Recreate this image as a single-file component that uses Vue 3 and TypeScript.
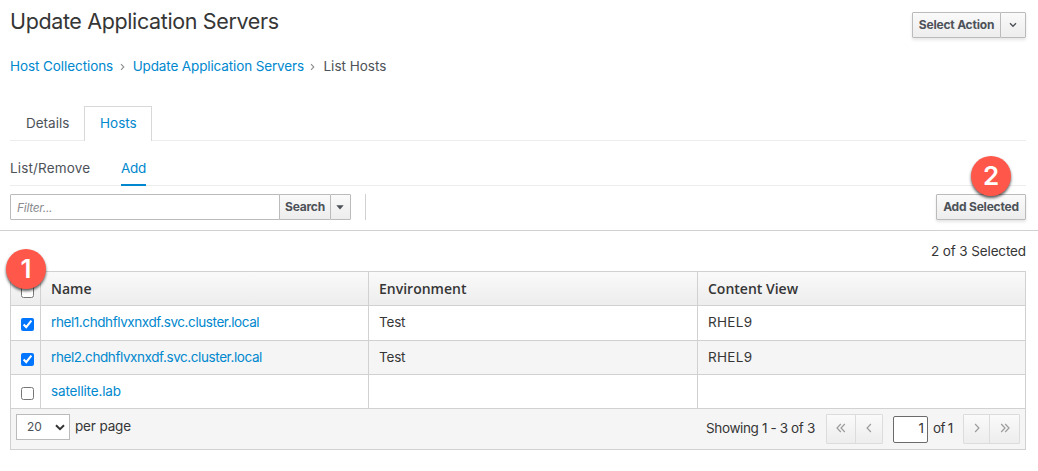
<script setup lang="ts">
import { ref } from 'vue'

interface Host {
  name: string
  environment: string
  view: string
  selected: boolean
}

const hosts = ref<Host[]>([
  { name: 'rhel1.chdhflvxnxdf.svc.cluster.local', environment: 'Test', view: 'RHEL9', selected: true },
  { name: 'rhel2.chdhflvxnxdf.svc.cluster.local', environment: 'Test', view: 'RHEL9', selected: true },
  { name: 'satellite.lab', environment: '', view: '', selected: false },
])
const filter = ref('')
</script>

<template>
  <main class="page">
    <header class="heading">
      <h1><span class="t-title">Update Application Servers</span></h1>
      <div class="btn-group">
        <button class="btn main">Select Action</button>
        <button class="btn toggle" aria-label="More actions">
          <svg width="8" height="6" viewBox="0 0 8 6"><path d="M1 1.2 4 4.2 7 1.2" fill="none" stroke="#4d5258" stroke-width="1.4" /></svg>
        </button>
      </div>
    </header>

    <nav class="breadcrumb">
      <a class="t-bc1">Host Collections</a>
      <svg class="sep" width="5" height="8" viewBox="0 0 5 8"><path d="M1 1.2 3.8 4 1 6.8" /></svg>
      <a class="t-bc2">Update Application Servers</a>
      <svg class="sep" width="5" height="8" viewBox="0 0 5 8"><path d="M1 1.2 3.8 4 1 6.8" /></svg>
      <span>List Hosts</span>
    </nav>

    <div class="tabs">
      <a class="tab">Details</a>
      <a class="tab active">Hosts</a>
    </div>

    <div class="subtabs">
      <a class="subtab list">List/Remove</a>
      <a class="subtab active">Add</a>
    </div>

    <div class="toolbar">
      <div class="search">
        <input v-model="filter" type="text" placeholder="Filter..." />
        <button class="btn go">Search</button>
        <button class="btn caret" aria-label="Saved searches">
          <svg width="8" height="5" viewBox="0 0 8 5"><path d="M0.3 0.3h7.4L4 4.6z" fill="#4d5258" /></svg>
        </button>
      </div>
      <div class="add-wrap">
        <button class="btn add">Add Selected</button>
        <span class="badge two">2</span>
      </div>
    </div>

    <div class="count">2 of 3 Selected</div>

    <section class="table">
      <div class="row head">
        <div class="cell check"><input type="checkbox" /></div>
        <div class="cell">Name</div>
        <div class="cell">Environment</div>
        <div class="cell">Content View</div>
      </div>
      <div v-for="host in hosts" :key="host.name" class="row">
        <div class="cell check"><input v-model="host.selected" type="checkbox" /></div>
        <div class="cell"><a :class="host.environment ? 't-host' : 't-lab'">{{ host.name }}</a></div>
        <div class="cell"><span class="t-test">{{ host.environment }}</span></div>
        <div class="cell"><span class="t-rhel">{{ host.view }}</span></div>
      </div>
      <footer class="pager">
        <div class="select">20
          <svg width="10" height="7" viewBox="0 0 10 7"><path d="M1 1.3 5 5.2 9 1.3" fill="none" stroke="#333" stroke-width="2" /></svg>
        </div>
        <span class="per">per page</span>
        <span class="showing">Showing 1 - 3 of 3</span>
        <div class="pages">
          <span class="pg wide"><svg width="10" height="10" viewBox="0 0 10 10"><path d="M4.8 1 1 5l3.8 4M8.8 1 5 5l3.8 4" /></svg></span>
          <span class="pg"><svg width="6" height="10" viewBox="0 0 6 10"><path d="M4.9 1 1.1 5l3.8 4" /></svg></span>
        </div>
        <div class="current">1</div>
        <span class="total">of 1</span>
        <div class="pages next">
          <span class="pg"><svg width="6" height="10" viewBox="0 0 6 10"><path d="M1.1 1l3.8 4L1.1 9" /></svg></span>
          <span class="pg wide"><svg width="10" height="10" viewBox="0 0 10 10"><path d="M1.2 1 5 5 1.2 9M5.2 1 9 5 5.2 9" /></svg></span>
        </div>
      </footer>
      <span class="badge one">1</span>
    </section>
  </main>
</template>

<style>
body {
  margin: 0;
  background: #fff;
}
</style>

<style scoped>
* {
  box-sizing: border-box;
}
.page {
  width: 1038px;
  height: 471px;
  overflow: hidden;
  font: 13.5px/20px Inter, 'Open Sans', sans-serif;
  color: #363636;
}
span,
a,
button {
  white-space: nowrap;
}
a {
  color: #0088ce;
}
.heading {
  height: 48px;
  padding: 0 12px 0 10px;
  display: flex;
  justify-content: space-between;
}
h1 {
  margin: 6px 0 0;
  font-size: 21.5px;
  line-height: 31px;
  font-weight: 400;
}
.btn-group {
  display: flex;
  height: 26px;
  margin-top: 12px;
  box-shadow: 0 2px 3px rgba(3, 3, 3, 0.1);
}
.btn {
  display: flex;
  align-items: center;
  justify-content: center;
  height: 26px;
  padding: 0;
  border: 1px solid #bbb;
  border-radius: 1px;
  background: linear-gradient(#fafafa, #ededed);
  color: #4d5258;
  font: 700 12px/18px Inter, sans-serif;
  letter-spacing: -0.2px;
}
.main {
  width: 89px;
}
.toggle {
  width: 26px;
  margin-left: -1px;
}
.breadcrumb {
  display: flex;
  align-items: center;
  height: 36px;
  padding-left: 10px;
  color: #4d5258;
}
.sep {
  margin: 2px 8px 0 6.5px;
  fill: none;
  stroke: #8b8d8f;
  stroke-width: 1.1;
}
.tabs {
  display: flex;
  margin: 22px 12px 0 10px;
  height: 35px;
  border-bottom: 1px solid #ededec;
}
.tab {
  width: 74px;
  height: 35px;
  padding: 7px 0 0 16px;
  color: #4d5258;
}
.tab.active {
  width: 68px;
  padding: 6px 0 0 15px;
  border: 1px solid #d8d8d8;
  border-bottom: 0;
  background: #fff;
  color: #0088ce;
}
.subtabs {
  display: flex;
  margin: 0 12px 0 10px;
  height: 45px;
  padding-top: 17px;
  border-bottom: 1px solid #ededec;
}
.subtab {
  height: 28px;
  color: #4d5258;
}
.list {
  width: 111px;
  letter-spacing: 0.16px;
}
.subtab.active {
  width: 25px;
  border-bottom: 2px solid #0088ce;
  color: #0088ce;
  letter-spacing: -0.3px;
}
.toolbar {
  display: flex;
  justify-content: space-between;
  height: 45px;
  padding: 8px 12px 0 10px;
  border-bottom: 1px solid #d1d1d1;
}
.search {
  display: flex;
  width: 356px;
  height: 26px;
  border-right: 1px solid #d1d1d1;
}
.search input {
  width: 270px;
  height: 26px;
  padding: 0 6px;
  border: 1px solid #bbb;
  border-radius: 1px 0 0 1px;
  outline: 0;
  font: italic 12px/18px Inter, sans-serif;
  letter-spacing: -0.3px;
}
.search input::placeholder {
  color: #8b8d8f;
}
.go {
  width: 52px;
  margin-left: -1px;
}
.caret {
  width: 21px;
  margin-left: -1px;
  padding-right: 1px;
}
.add-wrap {
  position: relative;
  width: 90px;
  height: 26px;
}
.add {
  width: 90px;
  box-shadow: 0 2px 3px rgba(3, 3, 3, 0.1);
}
.badge {
  position: absolute;
  width: 40px;
  height: 40px;
  border-radius: 50%;
  background: #ff584a;
  box-shadow: 0 2px 3px rgba(0, 0, 0, 0.65);
  color: #fff;
  font: 600 26px/40px Inter, sans-serif;
  text-align: center;
}
.two {
  top: -38px;
  left: 35px;
}
.one {
  top: -23px;
  left: -5px;
}
.count {
  height: 40px;
  padding: 10px 12px 0 0;
  text-align: right;
  letter-spacing: -0.13px;
}
.table {
  position: relative;
  width: 1016px;
  height: 179px;
  margin-left: 10px;
  border: 1px solid #d1d1d1;
}
.row {
  display: grid;
  grid-template-columns: 30px 328px 329px 1fr;
  height: 34px;
  border-bottom: 1px solid #d1d1d1;
}
.row:nth-child(2) {
  height: 35px;
}
.row:nth-child(3) {
  background: #f5f5f5;
}
.cell {
  padding: 6px 0 0 10px;
  border-right: 1px solid #d1d1d1;
}
.cell:last-child {
  border-right: 0;
}
.head {
  background: linear-gradient(#fafafa, #ededed);
  font: 600 14px/21px 'Open Sans', sans-serif;
}
.check {
  padding: 12px 0 0 10px;
  line-height: 0;
}
.head .check {
  padding-top: 13px;
}
.check input {
  width: 13px;
  height: 13px;
  margin: 0;
}
.pager {
  display: flex;
  height: 40px;
  padding: 5px 0 0 5px;
  background: #f5f5f5;
}
.select {
  display: flex;
  align-items: center;
  justify-content: space-between;
  width: 54px;
  height: 26px;
  padding: 0 4px 0 10px;
  border: 1px solid #bbb;
  background: #fff;
  color: #4d5258;
  font-size: 12px;
}
.per {
  width: 636px;
  padding: 2px 0 0 5px;
  letter-spacing: -0.15px;
}
.showing {
  width: 120px;
  padding-top: 4px;
  letter-spacing: -0.37px;
}
.pages {
  display: flex;
  width: 57px;
  height: 30px;
  border: 1px solid #dcdcdc;
  border-radius: 1px;
  background: linear-gradient(#fafafa, #ededed);
}
.pg {
  display: flex;
  align-items: center;
  justify-content: center;
  width: 27px;
  padding-bottom: 3px;
}
.pg.wide {
  width: 28px;
}
.pg + .pg {
  border-left: 1px solid #dcdcdc;
}
.next .pg {
  width: 25px;
}
.next .pg.wide {
  width: 30px;
}
.pg svg {
  fill: none;
  stroke: #9c9c9c;
  stroke-width: 1.2;
}
.current {
  width: 35px;
  height: 27px;
  margin: 2px 5px 0 10px;
  padding: 1px 3px 0 0;
  border: 1px solid #6b6b6b;
  border-radius: 2px;
  background: #fff;
  text-align: right;
}
.total {
  width: 30px;
  padding-top: 4px;
  letter-spacing: -0.7px;
}
.t-title { letter-spacing: -0.37px; }
.t-bc1 { letter-spacing: -0.08px; }
.t-bc2 { letter-spacing: -0.13px; }
.t-host { letter-spacing: -0.41px; }
.t-lab { letter-spacing: -0.15px; }
.t-test { letter-spacing: -0.2px; }
.t-rhel { letter-spacing: 0.3px; }
</style>
